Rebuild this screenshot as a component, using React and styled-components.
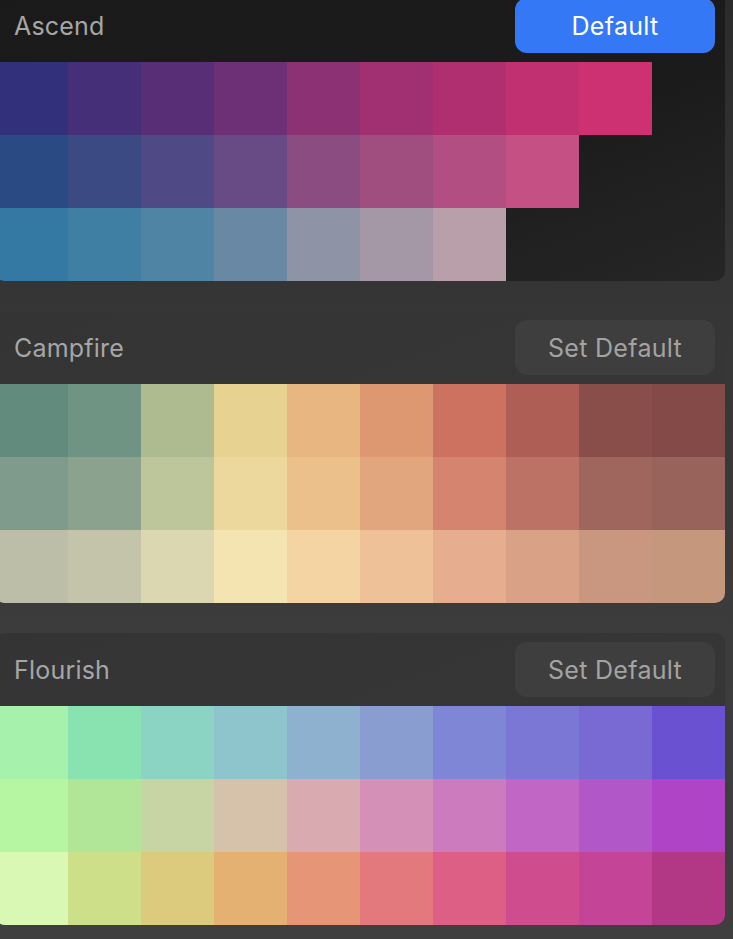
import React from "react";
import styled, { createGlobalStyle } from "styled-components";

const GlobalStyle = createGlobalStyle`
  html, body {
    margin: 0;
    padding: 0;
    height: 100%;
  }
  body {
    background: linear-gradient(180deg, #2b2b2b 0%, #363636 35%, #3c3c3c 70%, #3f3f3f 100%);
    font-family: Inter, "Open Sans", "Liberation Sans", sans-serif;
    overflow: hidden;
  }
`;

const Page = styled.div`
  width: 733px;
  height: 939px;
  overflow: hidden;
`;

const List = styled.div`
  display: flex;
  flex-direction: column;
  gap: 30px;
  width: 730px;
  margin: -11px 0 0 -5px;
`;

const Card = styled.section`
  border-radius: 10px;
  overflow: hidden;
  background: ${(p) =>
    p.$active
      ? "linear-gradient(160deg, #1a1a1a 0%, #1b1b1b 60%, #262626 100%)"
      : "linear-gradient(160deg, #343434 0%, #363636 60%, #393939 100%)"};
`;

const Header = styled.div`
  height: 73px;
  display: flex;
  align-items: center;
  justify-content: space-between;
  padding: 0 10px 0 19px;
  box-sizing: border-box;
`;

const Title = styled.span`
  font-size: 25px;
  color: #a6a6a6;
  letter-spacing: 0.2px;
`;

const Button = styled.button`
  width: 200px;
  height: 55px;
  border: none;
  border-radius: 12px;
  font-family: inherit;
  font-size: 25px;
  letter-spacing: 0.3px;
  background: ${(p) => (p.$primary ? "#3478f6" : "#3e3e3e")};
  color: ${(p) => (p.$primary ? "#ffffff" : "#a3a3a3")};
  cursor: pointer;
`;

const Grid = styled.div`
  display: grid;
  grid-template-columns: repeat(10, 73px);
  grid-auto-rows: 73px;
`;

const Swatch = styled.div`
  background: ${(p) => p.$color};
`;

const Empty = styled.div``;

const palettes = [
  {
    name: "Ascend",
    active: true,
    rows: [
      ["#32307a", "#462f79", "#582f76", "#6d2f76", "#8c3173", "#a03072", "#b02f70", "#c13071", "#cd3172"],
      ["#2a4a84", "#3c4a84", "#4f4a86", "#684b85", "#8b4c81", "#a04e80", "#b24e82", "#c45084"],
      ["#3479a3", "#3f7fa3", "#4f84a5", "#6888a3", "#8f93a6", "#a498a6", "#b99fa9"],
    ],
  },
  {
    name: "Campfire",
    rows: [
      ["#628a7d", "#6f9483", "#aebb91", "#e8d291", "#e8b680", "#dd9771", "#cd7160", "#ae5e55", "#894d4a", "#834a47"],
      ["#7e9b8c", "#8ba38e", "#bdc69b", "#ecd89c", "#ebc08b", "#e1a67d", "#d4846f", "#bd7266", "#9e665d", "#97635a"],
      ["#bcbea7", "#c3c4aa", "#dbd8b1", "#f4e4b1", "#f3d4a2", "#eec198", "#e7ad8f", "#d9a287", "#c9977f", "#c5977d"],
    ],
  },
  {
    name: "Flourish",
    rows: [
      ["#a6f1ac", "#88e3b0", "#8bd3c2", "#8ec4cb", "#8fb1d0", "#8a9dd0", "#7f86d5", "#7a77d5", "#7969d3", "#6951d1"],
      ["#b6f6a3", "#b1e699", "#c7d4a3", "#d6c2ab", "#d9aab0", "#d590b7", "#cc7bbe", "#c166c4", "#b257c7", "#b044c6"],
      ["#d9f8b4", "#cedf89", "#ddcb7d", "#e4b173", "#e69576", "#e3787d", "#dd5f86", "#cf4d8f", "#c44597", "#b23886"],
    ],
  },
];

function Palette({ name, rows, active }) {
  return (
    <Card $active={active}>
      <Header>
        <Title>{name}</Title>
        <Button $primary={active}>{active ? "Default" : "Set Default"}</Button>
      </Header>
      <Grid>
        {rows.map((row, r) =>
          Array.from({ length: 10 }).map((_, c) =>
            row[c] ? <Swatch key={`${r}-${c}`} $color={row[c]} /> : <Empty key={`${r}-${c}`} />
          )
        )}
      </Grid>
    </Card>
  );
}

export default function App() {
  return (
    <Page>
      <GlobalStyle />
      <List>
        {palettes.map((p) => (
          <Palette key={p.name} {...p} />
        ))}
      </List>
    </Page>
  );
}
